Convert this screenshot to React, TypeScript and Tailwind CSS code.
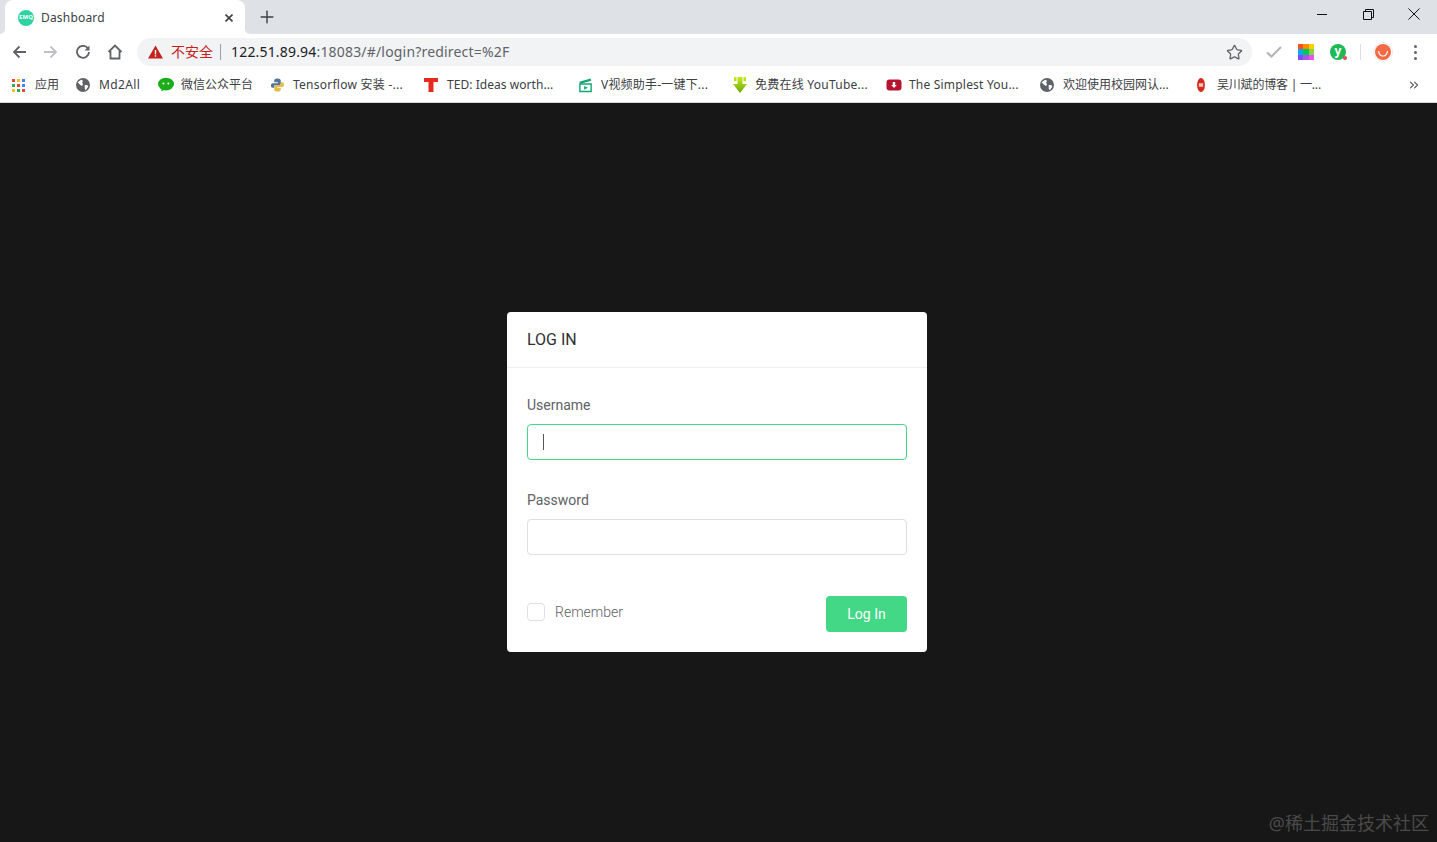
import { ReactNode } from "react";
import { ChevronsRight, Plus, Star } from "lucide-react";

const cjk = "font-['Noto_Sans','Noto_Sans_CJK_SC',sans-serif]";

const Globe = () => (
  <svg width="14" height="14" viewBox="0 0 16 16">
    <circle cx="8" cy="8" r="8" fill="#5f6368" />
    <path d="M3 4l3-2 2 1-1 2 1 2-1 2-2-1-3-3zM10 8l3 0 1 2-3 4-1-2z" fill="#fff" />
  </svg>
);

const AppsIcon = () => {
  const colors = ["#e8453c", "#f9bb2d", "#4285f4", "#34a853", "#e8453c", "#4285f4", "#f9bb2d", "#34a853", "#e8453c"];
  return (
    <div className="grid w-[13px] grid-cols-3 gap-[2px]">
      {colors.map((c, i) => (
        <div key={i} className="h-[3px] w-[3px]" style={{ backgroundColor: c }} />
      ))}
    </div>
  );
};

const WeChat = () => (
  <svg width="16" height="16" viewBox="0 0 17 16">
    <ellipse cx="8.500" cy="7" rx="8.500" ry="6.800" fill="#1aad19" />
    <path d="M4 11l-.5 4 4-2.500z" fill="#1aad19" />
    <circle cx="5.800" cy="6.500" r="1.100" fill="#fff" />
    <circle cx="11" cy="6.500" r="1.100" fill="#fff" />
  </svg>
);

const Python = () => (
  <svg width="15" height="16" viewBox="0 0 16 16">
    <path d="M8 1C5 1 4.500 2 4.500 3.500V5H8.500V6H3C1.500 6 1 7.200 1 8.500S1.800 11 3 11H4.500V9.500C4.500 8.500 5.300 8 6 8H10C11 8 11.500 7.200 11.500 6.500V3.500C11.500 2 10.500 1 8 1z" fill="#52749a" />
    <path d="M8 15C11 15 11.500 14 11.500 12.500V11H7.500V10H13C14.500 10 15 8.800 15 7.500S14.200 5 13 5H11.500V6.500C11.500 7.500 10.700 8 10 8H6C5 8 4.500 8.800 4.500 9.500V12.500C4.500 14 5.500 15 8 15z" fill="#e2bd4a" />
  </svg>
);

const Ted = () => (
  <svg width="14" height="16" viewBox="0 0 14 16">
    <path d="M0 1h14v4H9.500v10h-5V5H0z" fill="#e62b1e" />
  </svg>
);

const Clapper = () => (
  <svg width="15" height="16" viewBox="0 0 16 16">
    <path d="M2 7h12v8H2z" fill="none" stroke="#16a673" strokeWidth="1.500" />
    <path d="M1.500 4.500L13.500 1l.6 2.500L2 7z" fill="#16a673" />
    <path d="M6.500 9l4 2-4 2z" fill="#16a673" />
  </svg>
);

const GreenArrow = () => (
  <svg width="16" height="17" viewBox="0 0 16 17">
    <defs>
      <linearGradient id="ga" x1="0" y1="0" x2="0" y2="1">
        <stop offset="0" stopColor="#c5ec1a" />
        <stop offset="1" stopColor="#6ba806" />
      </linearGradient>
    </defs>
    <path d="M2 0h2.500v4H2zM5.500 0h5v7H15l-7 9-7-9h4.500zM11.500 0H14v4h-2.500z" fill="url(#ga)" />
  </svg>
);

const RedDownload = () => (
  <svg width="16" height="16" viewBox="0 0 16 16">
    <rect x="0.500" y="2.500" width="15" height="11" rx="3" fill="#b5132e" />
    <path d="M6.800 5h2.400v3h1.600L8 11 5.200 8h1.600z" fill="#fff" />
  </svg>
);

const RedBadge = () => (
  <svg width="14" height="16" viewBox="0 0 16 16">
    <ellipse cx="8" cy="8" rx="4.500" ry="8" fill="#d9281e" />
    <rect x="5.500" y="6" width="5" height="4" fill="#f5c6c0" />
  </svg>
);

const bookmarks: { icon: ReactNode; label: string; width: string; tracking: string }[] = [
  { icon: <AppsIcon />, label: "应用", width: "w-[64px]", tracking: "" },
  { icon: <Globe />, label: "Md2All", width: "w-[82px]", tracking: "tracking-[0.35px]" },
  { icon: <WeChat />, label: "微信公众平台", width: "w-[112px]", tracking: "" },
  { icon: <Python />, label: "Tensorflow 安装 -...", width: "w-[154px]", tracking: "tracking-[0.25px]" },
  { icon: <Ted />, label: "TED: Ideas worth...", width: "w-[154px]", tracking: "tracking-[0.05px]" },
  { icon: <Clapper />, label: "V视频助手-一键下...", width: "w-[154px]", tracking: "tracking-[0.2px]" },
  { icon: <GreenArrow />, label: "免费在线 YouTube...", width: "w-[154px]", tracking: "tracking-[0.25px]" },
  { icon: <RedDownload />, label: "The Simplest You...", width: "w-[154px]", tracking: "tracking-[0.2px]" },
  { icon: <Globe />, label: "欢迎使用校园网认...", width: "w-[154px]", tracking: "" },
  { icon: <RedBadge />, label: "吴川斌的博客 | 一...", width: "w-[200px]", tracking: "tracking-[-0.2px]" },
];

const BrowserChrome = () => (
  <div className={`shrink-0 ${cjk}`}>
    {/* tab strip */}
    <div className="flex h-[34px] items-stretch bg-[#dee1e6] pl-[5px]">
      <div className="relative flex w-[240px] items-center rounded-t-[8px] bg-white pl-[13px] pr-[12px] pt-[1px]">
        <div className="absolute bottom-0 left-[-5px] h-[5px] w-[5px] bg-white">
          <div className="h-full w-full rounded-br-[5px] bg-[#dee1e6]" />
        </div>
        <div className="absolute bottom-0 right-[-5px] h-[5px] w-[5px] bg-white">
          <div className="h-full w-full rounded-bl-[5px] bg-[#dee1e6]" />
        </div>
        <div className="flex h-[16px] w-[16px] items-center justify-center rounded-full bg-[#2ed3a1] text-[6px] font-bold text-white">
          EMQ
        </div>
        <span className="ml-[7px] flex-1 text-[12px] tracking-[0.18px] text-[#3c4043]">Dashboard</span>
        <svg width="8" height="8" viewBox="0 0 8 8" stroke="#3c4043" strokeWidth="1.600">
          <path d="M.5.5l7 7M7.500.5l-7 7" />
        </svg>
      </div>
      <div className="ml-[12px] flex items-center">
        <Plus size={20} strokeWidth={1.700} color="#3c4043" />
      </div>
      <div className="ml-auto flex items-start">
        <div className="flex h-[28px] w-[46px] items-center justify-center">
          <div className="h-px w-[10px] bg-[#111]" />
        </div>
        <div className="flex h-[28px] w-[46px] items-center justify-center">
          <svg width="11" height="11" viewBox="0 0 11 11" fill="none" stroke="#111">
            <path d="M.5 2.500h8v8h-8zM2.500 2.500V.5h8v8h-2" />
          </svg>
        </div>
        <div className="flex h-[28px] w-[46px] items-center justify-center">
          <svg width="12" height="12" viewBox="0 0 12 12" stroke="#111" strokeWidth="1">
            <path d="M.5.5l11 11M11.500.5l-11 11" />
          </svg>
        </div>
      </div>
    </div>

    {/* toolbar */}
    <div className="flex h-[34px] items-center bg-white pl-[12px] pt-[2px]">
      <svg width="14" height="14" viewBox="0 0 14 14" fill="none" stroke="#5f6368" strokeWidth="1.800">
        <path d="M14 7H2M7.500 1.500L2 7l5.500 5.500" />
      </svg>
      <svg width="14" height="14" viewBox="0 0 14 14" fill="none" stroke="#bdc1c6" strokeWidth="1.800" className="ml-[18px]">
        <path d="M0 7h12M6.500 1.500L12 7l-5.500 5.500" />
      </svg>
      <svg width="14" height="14" viewBox="0 0 14 14" fill="none" stroke="#5f6368" strokeWidth="1.800" className="ml-[18px]">
        <path d="M12 3.500A6 6 0 1 0 13 7" />
        <path d="M13.500 .5v5h-5z" fill="#5f6368" stroke="none" />
      </svg>
      <svg width="16" height="16" viewBox="0 0 16 16" fill="none" stroke="#5f6368" strokeWidth="1.800" className="ml-[17px]">
        <path d="M1.500 8L8 1.500 14.500 8M3.500 7v7.500h9V7" />
      </svg>

      <div className="ml-[14px] flex h-[28px] w-[1115px] items-center rounded-full bg-[#f1f3f4] pl-[11px] pr-[9px]">
        <svg width="15" height="14" viewBox="0 0 15 14">
          <path d="M7.500 0.500L15 13.500H0z" fill="#c5221f" />
          <path d="M6.800 5h1.400v4.500H6.800zM6.800 10.300h1.400v1.500H6.800z" fill="#fff" />
        </svg>
        <span className="ml-[8px] pb-[2px] text-[14px] text-[#c5221f]">不安全</span>
        <div className="ml-[7px] h-[16px] w-px bg-[#9aa0a6]" />
        <div className="ml-[10px] flex-1 pb-[2px] text-[14px] tracking-[0.18px]">
          <span className="text-[#202124]">122.51.89.94</span>
          <span className="text-[#5f6368]">:18083/#/login?redirect=%2F</span>
        </div>
        <Star size={17} strokeWidth={1.800} color="#5f6368" />
      </div>

      <div className="flex flex-1 items-center pl-[14px]">
        <svg width="16" height="12" viewBox="0 0 16 12" fill="none" stroke="#b4b6b8" strokeWidth="2.200">
          <path d="M1 6.500l4.500 4L15 1" />
        </svg>
        <div className="ml-[16px] grid h-[16px] w-[16px] grid-cols-3 grid-rows-3">
          {["#f4511e", "#fb8c00", "#fdd000", "#03a9f4", "#00c853", "#8bd44a", "#7c4dff", "#aa55ee", "#f050f0"].map((c) => (
            <div key={c} style={{ backgroundColor: c }} />
          ))}
        </div>
        <div className="relative ml-[16px] flex h-[16px] w-[16px] items-center justify-center rounded-full bg-[#1db954] pb-[2px] text-[12px] font-bold leading-none text-white">
          y
          <div className="absolute bottom-0 right-[-1px] h-[4px] w-[4px] rounded-full bg-[#f0465a]" />
        </div>
        <div className="ml-[14px] h-[16px] w-px bg-[#dadce0]" />
        <div className="ml-[12px] flex h-[20px] w-[20px] items-center justify-center rounded-full border border-[#e8eaed]">
          <svg width="16" height="16" viewBox="0 0 16 16">
            <circle cx="8" cy="8" r="8" fill="#f46a45" />
            <path d="M3.500 7c.5 3.500 2.500 5 4.500 5s4-1.500 4.500-5" fill="none" stroke="#fff" strokeWidth="1.200" />
          </svg>
        </div>
        <div className="ml-[21px] flex flex-col gap-[3px]">
          <div className="h-[3px] w-[3px] rounded-full bg-[#5f6368]" />
          <div className="h-[3px] w-[3px] rounded-full bg-[#5f6368]" />
          <div className="h-[3px] w-[3px] rounded-full bg-[#5f6368]" />
        </div>
      </div>
    </div>

    {/* bookmarks */}
    <div className="flex h-[35px] items-center border-b border-[#d4d6d9] bg-white pl-[12px]">
      {bookmarks.map((b) => (
        <div key={b.label} className={`flex items-center ${b.width}`}>
          <div className="flex w-[16px] shrink-0 items-center justify-start">{b.icon}</div>
          <span className={`ml-[7px] whitespace-nowrap text-[12px] text-[#3c4043] ${b.tracking}`}>{b.label}</span>
        </div>
      ))}
      <ChevronsRight size={14} strokeWidth={2.200} color="#5f6368" className="ml-auto mr-[16px]" />
    </div>
  </div>
);

const LoginCard = () => (
  <div className="w-[420px] rounded-[4px] bg-white font-['Roboto',sans-serif]">
    <div className="flex h-[56px] items-center border-b border-[#eeeff2] px-[20px] pt-[1px] text-[16px] text-[#303133]">
      LOG IN
    </div>
    <div className="px-[20px] pb-[20px] pt-[27px]">
      <label className="block text-[14px] leading-[20px] text-[#606266]">Username</label>
      <div className="mt-[9px] flex h-[36px] items-center rounded-[4px] border border-[#42d885] pl-[15px]">
        <div className="h-[16px] w-px bg-[#555]" />
      </div>
      <label className="mt-[30px] block text-[14px] leading-[20px] text-[#606266]">Password</label>
      <div className="mt-[9px] h-[36px] rounded-[4px] border border-[#dcdfe6]" />
      <div className="mt-[41px] flex items-center justify-between">
        <div className="flex items-center">
          <div className="mb-[4px] h-[18px] w-[18px] rounded-[4px] border border-[#dcdfe6]" />
          <span className="mb-[4px] ml-[10px] text-[14px] font-light text-[#606266]">Remember</span>
        </div>
        <button className="h-[36px] w-[81px] rounded-[4px] bg-[#42d885] text-[14px] text-white">Log In</button>
      </div>
    </div>
  </div>
);

export default function App() {
  return (
    <div className="relative flex h-[842px] w-[1437px] flex-col overflow-hidden bg-[#171717]">
      <BrowserChrome />
      <div className="flex flex-1 items-start justify-center pr-[3px] pt-[209px]">
        <LoginCard />
      </div>
      <div className={`absolute bottom-[6px] right-[8px] text-[18px] leading-[26px] text-[#4a4a4a] ${cjk}`}>
        @稀土掘金技术社区
      </div>
    </div>
  );
}
